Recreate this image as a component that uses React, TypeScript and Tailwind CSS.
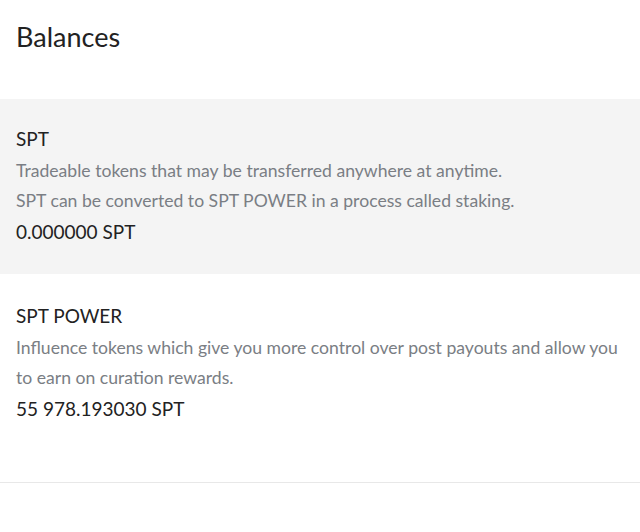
export default function App() {
  return (
    <div className="min-h-[532px] bg-white font-['Lato',sans-serif] text-[#222]">
      <div className="h-[99px] px-4 pt-[19px]">
        <h1 className="text-[27px] leading-[36px]">Balances</h1>
      </div>
      <BalanceRow
        title="SPT"
        lines={[
          "Tradeable tokens that may be transferred anywhere at anytime.",
          "SPT can be converted to SPT POWER in a process called staking.",
        ]}
        value="0.000000 SPT"
        shaded
      />
      <BalanceRow
        title="SPT POWER"
        lines={[
          "Influence tokens which give you more control over post payouts and allow you to earn on curation rewards.",
        ]}
        value="55 978.193030 SPT"
      />
    </div>
  );
}

function BalanceRow({
  title,
  lines,
  value,
  shaded,
}: {
  title: string;
  lines: string[];
  value: string;
  shaded?: boolean;
}) {
  return (
    <div
      className={
        shaded
          ? "h-[175px] bg-[#f4f4f4] px-4 pt-[26px]"
          : "h-[209px] border-b border-[#e8e8e8] px-4 pt-[28px]"
      }
    >
      <div className="text-[19px] leading-[28px]">{title}</div>
      <div className="mt-[3px] text-[17.6px] leading-[29.5px] text-[#7a7e84]">
        {lines.map((l) => (
          <p key={l}>{l}</p>
        ))}
      </div>
      <div className="text-[19px] leading-[34px]">{value}</div>
    </div>
  );
}
